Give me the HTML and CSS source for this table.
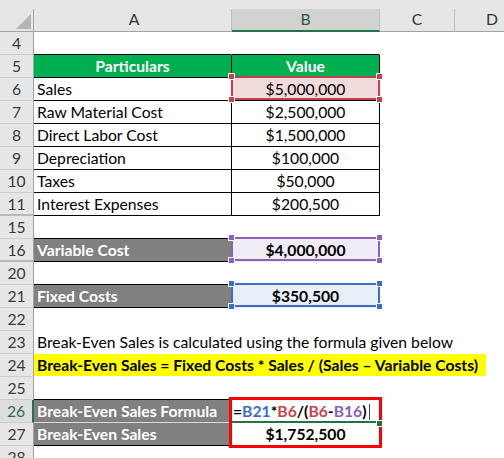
FILE: index.html
```html
<!DOCTYPE html>
<html>
<head>
<meta charset="utf-8">
<link rel="stylesheet" href="styles.css">
</head>
<body>
<div class="sheet">
  <div class="hdr">
    <div class="corner"><span class="tri"></span></div>
    <div class="ch a">A</div>
    <div class="ch b selcol">B</div>
    <div class="ch cc">C</div>
    <div class="ch cd">D</div>
  </div>

  <div class="row"><div class="rh">4</div><div class="c a bk-b"></div><div class="c b bk-b"></div><div class="c cc"></div><div class="c cd"></div></div>
  <div class="row"><div class="rh">5</div><div class="c a ctr green bk-b bk-r">Particulars</div><div class="c b green bk-b bk-r">Value</div><div class="c cc"></div><div class="c cd"></div></div>
  <div class="row"><div class="rh">6</div><div class="c a bk-b bk-r">Sales</div><div class="c b pink bk-b bk-r">$5,000,000<div class="selbox red"><i class="h tl"></i><i class="h tr"></i><i class="h bl"></i><i class="h br"></i></div></div><div class="c cc"></div><div class="c cd"></div></div>
  <div class="row"><div class="rh">7</div><div class="c a bk-b bk-r">Raw Material Cost</div><div class="c b bk-b bk-r">$2,500,000</div><div class="c cc"></div><div class="c cd"></div></div>
  <div class="row"><div class="rh">8</div><div class="c a bk-b bk-r">Direct Labor Cost</div><div class="c b bk-b bk-r">$1,500,000</div><div class="c cc"></div><div class="c cd"></div></div>
  <div class="row"><div class="rh">9</div><div class="c a bk-b bk-r">Depreciation</div><div class="c b bk-b bk-r">$100,000</div><div class="c cc"></div><div class="c cd"></div></div>
  <div class="row"><div class="rh">10</div><div class="c a bk-b bk-r">Taxes</div><div class="c b bk-b bk-r">$50,000</div><div class="c cc"></div><div class="c cd"></div></div>
  <div class="row"><div class="rh hid">11</div><div class="c a bk-b bk-r">Interest Expenses</div><div class="c b bk-b bk-r">$200,500</div><div class="c cc"></div><div class="c cd"></div></div>
  <div class="row"><div class="rh">15</div><div class="c a bk-b"></div><div class="c b"></div><div class="c cc"></div><div class="c cd"></div></div>
  <div class="row"><div class="rh hid">16</div><div class="c a gray bk-b">Variable Cost</div><div class="c b lilac bold">$4,000,000<div class="selbox purple"><i class="h tl"></i><i class="h tr"></i><i class="h bl"></i><i class="h br"></i></div></div><div class="c cc"></div><div class="c cd"></div></div>
  <div class="row"><div class="rh">20</div><div class="c a bk-b"></div><div class="c b"></div><div class="c cc"></div><div class="c cd"></div></div>
  <div class="row"><div class="rh">21</div><div class="c a gray bk-b">Fixed Costs</div><div class="c b ice bold">$350,500<div class="selbox blue"><i class="h tl"></i><i class="h tr"></i><i class="h bl"></i><i class="h br"></i></div></div><div class="c cc"></div><div class="c cd"></div></div>
  <div class="row"><div class="rh">22</div><div class="c a"></div><div class="c b"></div><div class="c cc"></div><div class="c cd"></div></div>
  <div class="row"><div class="rh">23</div><div class="c a">Break-Even Sales is calculated using the formula given below</div><div class="c b"></div><div class="c cc"></div><div class="c cd"></div></div>
  <div class="row"><div class="rh">24</div><div class="c a"><span class="hilite">Break-Even Sales = Fixed Costs * Sales / (Sales – Variable Costs)</span></div><div class="c b"></div><div class="c cc"></div><div class="c cd"></div></div>
  <div class="row"><div class="rh">25</div><div class="c a bk-b"></div><div class="c b"></div><div class="c cc"></div><div class="c cd"></div></div>
  <div class="row"><div class="rh active">26</div><div class="c a gray lt-b">Break-Even Sales Formula</div><div class="c b formula"><span class="k">=</span><span class="rb">B21</span><span class="k">*</span><span class="rr">B6</span><span class="k">/(</span><span class="rr">B6</span><span class="k">-</span><span class="rp">B16</span><span class="k">)</span><span class="caret"></span><div class="bigbox"></div><div class="activeline"></div><div class="activehandle"></div></div><div class="c cc"></div><div class="c cd"></div></div>
  <div class="row"><div class="rh">27</div><div class="c a gray bk-b">Break-Even Sales</div><div class="c b bold">$1,752,500</div><div class="c cc"></div><div class="c cd"></div></div>
  <div class="row last"><div class="rh">28</div><div class="c a"></div><div class="c b"></div><div class="c cc"></div><div class="c cd"></div></div>
</div>
</body>
</html>
```

FILE: styles.css
```css
* { box-sizing: border-box; }
html, body { margin: 0; padding: 0; background: #fff; }
body {
  font-family: Lato, "Open Sans", sans-serif;
  font-size: 15.7px;
  color: #000;
  width: 504px;
  height: 458px;
  overflow: hidden;
}
.sheet { display: flex; flex-direction: column; width: 504px; overflow: hidden; }

/* column header */
.hdr {
  display: flex;
  align-items: flex-end;
  height: 32px;
  padding-top: 9px;
  background: #e6e6e6;
}
.corner {
  width: 34px;
  height: 23px;
  flex-shrink: 0;
  border-right: 1px solid #a3a3a3;
  border-bottom: 1px solid #a3a3a3;
  display: flex;
  justify-content: flex-end;
  align-items: flex-end;
  padding: 0 2px 2px 0;
}
.tri {
  width: 0; height: 0;
  border-left: 15px solid transparent;
  border-bottom: 15px solid #b3b3b3;
}
.ch {
  height: 23px;
  line-height: 21px;
  text-align: center;
  color: #333;
  border-right: 1px solid #bdbdbd;
  border-bottom: 1px solid #a3a3a3;
  flex-shrink: 0;
}
.ch.a { width: 198px; }
.ch.b { width: 148px; }
.ch.cc { width: 75px; }
.ch.selcol {
  background: #d2d2d2;
  color: #1f5c36;
  border-bottom: 2px solid #217346;
}
.ch.cd { width: 49px; text-align: left; padding-left: 31px; border-right: 0; }

/* rows */
.row { display: flex; height: 23px; flex-shrink: 0; }
.row.last { height: 13px; overflow: hidden; }
.rh {
  width: 34px;
  flex-shrink: 0;
  background: #e6e6e6;
  border-right: 1px solid #a3a3a3;
  border-bottom: 1px solid #cbcbcb;
  text-align: center;
  line-height: 22px;
  color: #3a3a3a;
}
.rh.hid { border-bottom: 2px solid #b9b9b9; }
.rh.active {
  color: #217346;
  background: #dedede;
  border-right: 2px solid #217346;
}
.c {
  height: 23px;
  flex-shrink: 0;
  border-right: 1px solid transparent;
  border-bottom: 1px solid transparent;
  line-height: 22px;
  white-space: nowrap;
  position: relative;
}
.a { width: 198px; padding-left: 3px; }
.b { width: 148px; text-align: center; }
.cc { width: 75px; }
.cd { width: 49px; }
.ctr { text-align: center; padding-left: 0; }

.bk-b { border-bottom-color: #000; }
.bk-r { border-right-color: #000; }
.lt-b { border-bottom-color: #d9d9d9; }

.green { background: #00b050; color: #fff; font-weight: 700; }
.gray { background: #808080; color: #fff; font-weight: 700; }
.pink { background: #f2dcdb; }
.lilac { background: #f0ecf6; }
.ice { background: #e8eff9; }
.bold { font-weight: 700; }

/* range selection boxes drawn over cells */
.selbox {
  position: absolute;
  left: -1px;
  right: -1px;
  top: -2px;
  bottom: 0;
  border: 2px solid var(--sc);
  z-index: 2;
}
.selbox.red { --sc: #c4404a; }
.selbox.purple { --sc: #8a62bd; }
.selbox.blue { --sc: #3a6ec8; }
.h {
  position: absolute;
  width: 5px;
  height: 5px;
  background: var(--sc);
  box-shadow: 0 0 0 1px #fff;
}
.h.tl { left: -4px; top: -4px; }
.h.tr { right: -4px; top: -4px; }
.h.bl { left: -4px; bottom: -4px; }
.h.br { right: -4px; bottom: -4px; }

.hilite {
  display: inline-block;
  width: 452px;
  height: 22px;
  margin-left: -3px;
  padding-left: 3px;
  background: #ffff00;
  font-weight: 700;
}

/* formula cell */
.formula { text-align: left; padding-left: 1px; font-weight: 700; }
.k { color: #000; }
.rb { color: #3a6ec8; }
.rr { color: #c9444b; }
.rp { color: #8862b8; }
.caret {
  display: inline-block;
  width: 1px;
  height: 16px;
  background: #444;
  margin-left: 2px;
  vertical-align: -3px;
}
.bigbox {
  position: absolute;
  left: -3px;
  top: -3px;
  width: 153px;
  height: 51px;
  border: 3px solid #ff0000;
  z-index: 3;
}
.activeline {
  position: absolute;
  left: -1px;
  bottom: -1px;
  width: 146px;
  height: 2px;
  background: #217346;
  z-index: 2;
}
.activehandle {
  position: absolute;
  left: 145px;
  top: 21px;
  width: 5px;
  height: 5px;
  background: #217346;
  box-shadow: 0 0 0 1px #fff;
  z-index: 4;
}
```
